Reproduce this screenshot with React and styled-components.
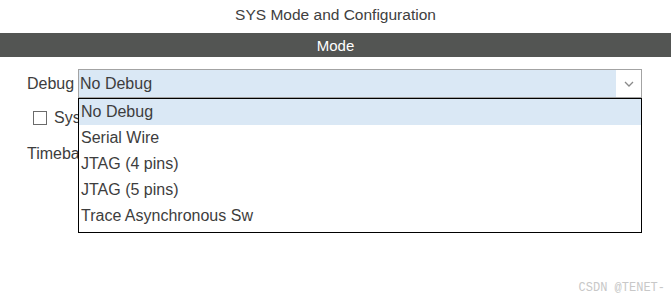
import React from "react";
import styled, { createGlobalStyle } from "styled-components";

const GlobalStyle = createGlobalStyle`
  html, body {
    margin: 0;
    padding: 0;
    background: #fff;
  }
  body {
    width: 671px;
    height: 300px;
    overflow: hidden;
    font-family: "Liberation Sans", Arial, sans-serif;
    color: #3d3d3d;
  }
`;

const Page = styled.div`
  position: relative;
  width: 671px;
  height: 300px;
  display: flex;
  flex-direction: column;
`;

const Title = styled.div`
  box-sizing: border-box;
  height: 33px;
  padding-bottom: 3px;
  display: flex;
  align-items: center;
  justify-content: center;
  font-size: 15.5px;
  color: #404040;
`;

const SectionBar = styled.div`
  height: 24px;
  background: #535553;
  color: #fff;
  display: flex;
  align-items: center;
  justify-content: center;
  font-size: 15px;
`;

const Form = styled.div`
  padding: 12px 0 0 27px;
  display: flex;
  flex-direction: column;
`;

const Row = styled.div`
  display: flex;
  align-items: center;
  height: ${(p) => p.$h || 29}px;
  margin-top: ${(p) => p.$mt || 0}px;
  font-size: 16px;
`;

const Label = styled.span`
  width: 51px;
  white-space: nowrap;
`;

const SelectWrap = styled.div`
  position: relative;
  width: 564px;
  height: 29px;
`;

const SelectBox = styled.div`
  box-sizing: border-box;
  height: 29px;
  border: 1px solid #a3a3a3;
  display: flex;
  align-items: stretch;
`;

const SelectValue = styled.div`
  flex: 1;
  background: #dae8f5;
  padding-left: 1px;
  display: flex;
  align-items: center;
`;

const Arrow = styled.div`
  width: 25px;
  background: #fff;
  display: flex;
  align-items: center;
  justify-content: center;
`;

const Menu = styled.div`
  position: absolute;
  top: 29px;
  left: 0;
  z-index: 2;
  box-sizing: border-box;
  width: 564px;
  padding-bottom: 3px;
  border: 1px solid #000;
  background: #fff;
`;

const Option = styled.div`
  height: 26px;
  padding-left: 2px;
  display: flex;
  align-items: center;
  font-size: 16px;
  background: ${(p) => (p.$active ? "#dae8f5" : "#fff")};
`;

const CheckRow = styled.label`
  display: flex;
  align-items: center;
  gap: 7px;
  padding-left: 6px;
  height: 14px;
  margin-top: 13px;
  font-size: 16px;
  white-space: nowrap;
`;

const Checkbox = styled.span`
  box-sizing: border-box;
  width: 14px;
  height: 14px;
  border: 1px solid #6b6b6b;
  background: #fff;
`;

const TimebaseRow = styled(Row)`
  white-space: nowrap;
`;

const Watermark = styled.div`
  position: absolute;
  right: 6px;
  bottom: 5px;
  font-family: "Liberation Mono", "DejaVu Sans Mono", monospace;
  font-size: 12px;
  color: #c8c8c8;
`;

const options = [
  "No Debug",
  "Serial Wire",
  "JTAG (4 pins)",
  "JTAG (5 pins)",
  "Trace Asynchronous Sw",
];

function Chevron() {
  return (
    <svg width="10" height="6" viewBox="0 0 10 6">
      <path d="M1 1 L5 5 L9 1" fill="none" stroke="#8a8a8a" strokeWidth="1.3" />
    </svg>
  );
}

export default function App() {
  return (
    <>
      <GlobalStyle />
      <Page>
        <Title>SYS Mode and Configuration</Title>
        <SectionBar>Mode</SectionBar>
        <Form>
          <Row>
            <Label>Debug</Label>
            <SelectWrap>
              <SelectBox>
                <SelectValue>No Debug</SelectValue>
                <Arrow>
                  <Chevron />
                </Arrow>
              </SelectBox>
              <Menu>
                {options.map((o, i) => (
                  <Option key={o} $active={i === 0}>
                    {o}
                  </Option>
                ))}
              </Menu>
            </SelectWrap>
          </Row>
          <CheckRow>
            <Checkbox />
            System Wake-Up
          </CheckRow>
          <TimebaseRow $mt={14}>Timebase Source</TimebaseRow>
        </Form>
        <Watermark>CSDN @TENET-</Watermark>
      </Page>
    </>
  );
}
